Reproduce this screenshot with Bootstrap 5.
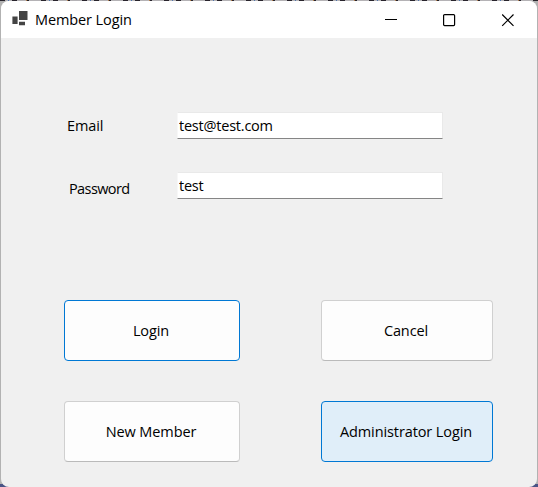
<!DOCTYPE html>
<html lang="en">
<head>
<meta charset="utf-8">
<meta name="viewport" content="width=device-width, initial-scale=1">
<title>Member Login</title>
<link href="https://cdn.jsdelivr.net/npm/bootstrap@5.3.0/dist/css/bootstrap.min.css" rel="stylesheet">
<style>
body { width: 538px; height: 487px; padding: 1px 1px 0; color: #000;
  font: 14.5px/20px "Open Sans", "Noto Sans", sans-serif; letter-spacing: -.1px;
  background:
    repeating-linear-gradient(90deg, #28242c 0 5px, #b4b2b5 5px 8px, #4f76ae 8px 9px, #b4b2b5 9px 12px, #28242c 12px 17px, #b4b2b5 17px 26px, #b07a45 26px 27px, #28242c 27px 29px, #b4b2b5 29px 41px) 0 0 / 100% 1px no-repeat,
    linear-gradient(#4a5486, #4a5486) 0 100% / 100% 3px no-repeat, #b2b2b2; }
.app-window { height: 486px; background: #f0f0f0; border-radius: 8px; }
.title-bar { height: 37px; background: #fff; padding-right: 1px; }
.app-icon { margin-left: 11px; margin-right: 7px; }
.caption-btn { width: 58px; height: 37px; color: #000; background: none; border: 0; padding: 0; }
.client { padding: 74px 0 0 63px; }
.form-line { height: 27px; margin-bottom: 33px; }
.form-line label { width: 113px; }
.entry.form-control { width: 266px; height: 27px; padding: 0 1px 1px; font: inherit; letter-spacing: -.22px; color: #000;
  background: #fff; border: 1px solid #e9e9e9; border-bottom-color: #858585; border-left-color: #f7f7f7; border-radius: 0; box-shadow: none; }
.actions { display: grid; grid-template-columns: 176px 172px; column-gap: 81px; row-gap: 40px; margin-top: 101px; }
.action { height: 61px; padding: 0 2px 0 0; font: inherit; letter-spacing: inherit; border-radius: 4px;
  --bs-btn-color: #000; --bs-btn-bg: #fdfdfd; --bs-btn-border-color: #d0d0d0;
  --bs-btn-hover-color: #000; --bs-btn-hover-bg: #e0eef9; --bs-btn-hover-border-color: #0078d4; }
.action-plain { border-bottom-color: #bababa; }
.action-default { --bs-btn-border-color: #0078d4; }
.action-hot { --bs-btn-bg: #e0eef9; --bs-btn-border-color: #0078d4; }
.w-email { padding-left: 3px; }
.w-pass { padding-left: 5px; padding-top: 6px; letter-spacing: -.6px; }
</style>
<script src="https://cdn.jsdelivr.net/npm/bootstrap@5.3.0/dist/js/bootstrap.bundle.min.js"></script>
</head>
<body class="overflow-hidden">
<main class="app-window overflow-hidden">
  <header class="title-bar d-flex align-items-center">
    <svg class="app-icon" width="16" height="17" fill="#444"><path d="M7 0h8.5v9H7zM.4 5.5h5.2V13H.4zM7 10.7h6v3.5H7z"/></svg>
    <span class="me-auto">Member Login</span>
    <button class="caption-btn" aria-label="Minimize"><svg width="13" height="13" stroke="currentColor"><path d="M0 5.5h12"/></svg></button>
    <button class="caption-btn" aria-label="Maximize"><svg width="13" height="13" fill="none" stroke="currentColor" stroke-width="1.2"><rect x=".6" y=".6" width="11" height="11" rx="1"/></svg></button>
    <button class="caption-btn" aria-label="Close"><svg width="13" height="13" stroke="currentColor" stroke-width="1.2"><path d="M1.2 .5l11.3 11.3M12.5 .5L1.2 11.8"/></svg></button>
  </header>
  <form class="client">
    <div class="form-line d-flex align-items-center"><label class="w-email" for="email">Email</label><input class="form-control entry" id="email" value="test@test.com"></div>
    <div class="form-line d-flex align-items-center"><label class="w-pass" for="pass">Password</label><input class="form-control entry" id="pass" value="test"></div>
    <div class="actions">
      <button type="button" class="btn action action-default">Login</button>
      <button type="button" class="btn action action-plain">Cancel</button>
      <button type="button" class="btn action action-plain">New Member</button>
      <button type="button" class="btn action action-hot">Administrator Login</button>
    </div>
  </form>
</main>
</body>
</html>
